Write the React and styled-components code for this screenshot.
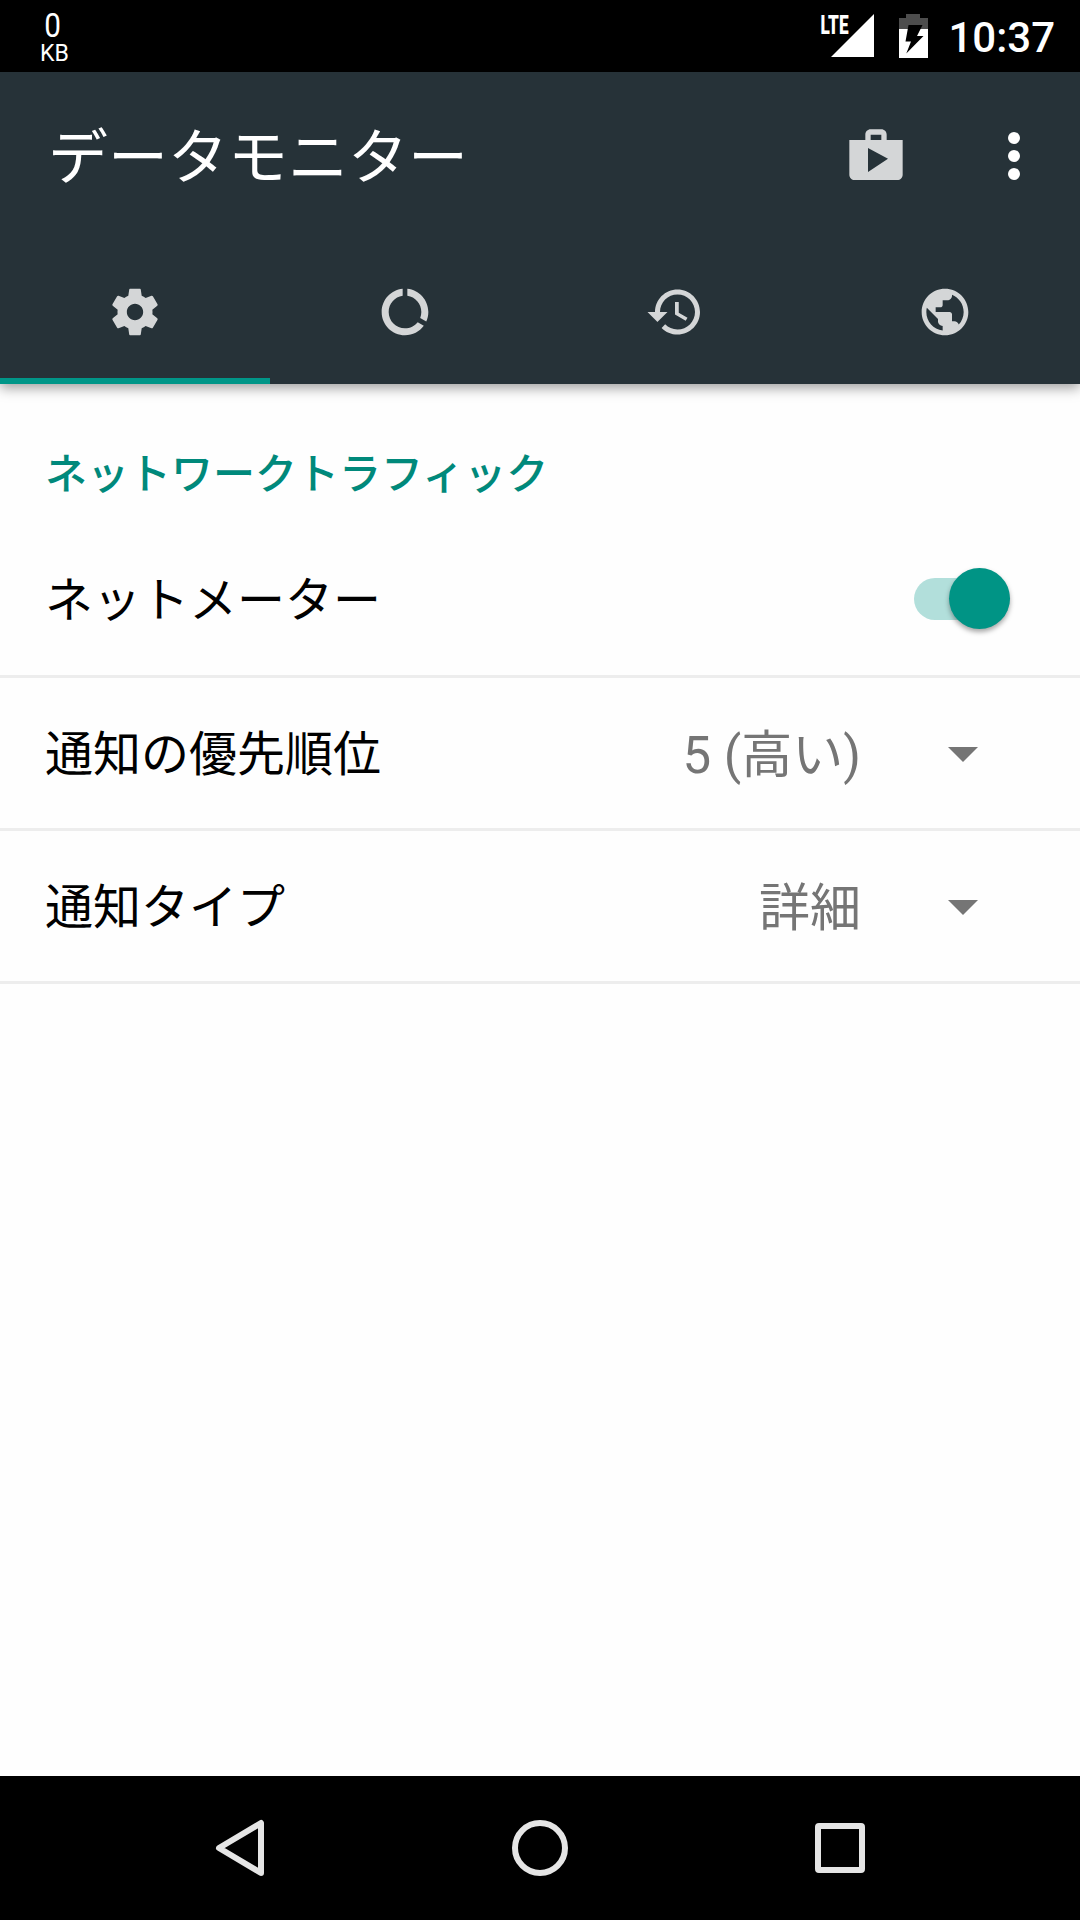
import React from "react";
import styled, { createGlobalStyle } from "styled-components";

export default function App() {
  return (
    <Screen>
      <GlobalStyle />
      <StatusBar>
        <Traffic>
          <TrafficValue>0</TrafficValue>
          <TrafficUnit>KB</TrafficUnit>
        </Traffic>
        <StatusIcons>
          <SignalIcon />
          <BatteryIcon />
          <Clock>10:37</Clock>
        </StatusIcons>
      </StatusBar>
      <Header>
        <Toolbar>
          <Title>データモニター</Title>
          <Actions>
            <Icon $size={64} viewBox="0 0 24 24">
              <path d={icons.shop} />
            </Icon>
            <OverflowIcon viewBox="0 0 12 48">
              <circle cx="6" cy="6" r="6" />
              <circle cx="6" cy="24" r="6" />
              <circle cx="6" cy="42" r="6" />
            </OverflowIcon>
          </Actions>
        </Toolbar>
        <Tabs>
          {tabs.map((tab, index) => {
            return (
              <Tab key={tab.icon} $active={index === 0}>
                <Icon $size={tab.size} viewBox="0 0 24 24">
                  <path d={icons[tab.icon]} />
                </Icon>
              </Tab>
            );
          })}
        </Tabs>
      </Header>
      <Content>
        <SectionTitle>ネットワークトラフィック</SectionTitle>
        <Row>
          <Label>ネットメーター</Label>
          <Switch>
            <Thumb />
          </Switch>
        </Row>
        {selects.map((item) => {
          return (
            <Row key={item.label}>
              <Label>{item.label}</Label>
              <Select>
                <Value>{item.value}</Value>
                <Arrow />
              </Select>
            </Row>
          );
        })}
      </Content>
      <NavBar>
        <NavIcon viewBox="0 0 60 60">
          <path d="M51 5v50L9 30z" />
        </NavIcon>
        <NavIcon viewBox="0 0 60 60">
          <circle cx="30" cy="30" r="25" />
        </NavIcon>
        <NavIcon viewBox="0 0 60 60">
          <rect x="8" y="8" width="44" height="44" rx="1" />
        </NavIcon>
      </NavBar>
    </Screen>
  );
}

function SignalIcon() {
  return (
    <svg width="56" height="64" viewBox="-2 -10 56 64" fill="#fff">
      <text
        x="0.500"
        y="19.500"
        fontSize="26"
        fontWeight="900"
        textLength="28"
        lengthAdjust="spacingAndGlyphs"
      >
        LTE
      </text>
      <path d="M54 0v43H11z" />
    </svg>
  );
}

function BatteryIcon() {
  return (
    <svg width="29" height="44" viewBox="0 0 29 44">
      <path fill="#4d4d4d" d="M7 0h14v4h8v11H0V4h7z" />
      <path fill="#fff" d="M0 15h29v29H0z" />
      <path fill="#000" d="M9.500 11h14L18 22h6.500L7.300 39.500 12 27.500H6.500z" />
    </svg>
  );
}

const GlobalStyle = createGlobalStyle`
  * {
    box-sizing: border-box;
  }

  body {
    margin: 0;
    font-family: Roboto, "Noto Sans CJK JP", sans-serif;
  }

  svg {
    display: block;
    flex: none;
  }
`;

const Screen = styled.div`
  display: flex;
  flex-direction: column;
  width: 1080px;
  height: 1920px;
  background: #fefefe;
  overflow: hidden;
`;

const StatusBar = styled.div`
  display: flex;
  justify-content: space-between;
  height: 72px;
  padding: 0 25px 0 40px;
  background: #000;
  color: #fff;
`;

const Traffic = styled.div`
  display: flex;
  flex-direction: column;
  padding-top: 10px;
`;

const TrafficValue = styled.span`
  padding-left: 3px;
  font-size: 33px;
  line-height: 31px;
  transform: scaleX(0.9);
`;

const TrafficUnit = styled.span`
  font-size: 24px;
  line-height: 24px;
  transform: scaleX(0.96);
  transform-origin: left;
`;

const StatusIcons = styled.div`
  display: flex;
  align-items: center;
  gap: 25px;
`;

const Clock = styled.span`
  margin-left: -5px;
  padding-top: 3px;
  font-size: 42px;
  font-weight: 500;
  line-height: 48px;
`;

const Header = styled.header`
  position: relative;
  height: 312px;
  background: #263238;
  box-shadow: 0 4px 12px rgba(0, 0, 0, 0.38);
`;

const Toolbar = styled.div`
  display: flex;
  align-items: center;
  justify-content: space-between;
  height: 168px;
  padding: 0 60px 0 48px;
`;

const Title = styled.h1`
  margin: 0;
  padding-top: 6px;
  color: #fff;
  font-size: 60px;
  font-weight: 400;
  line-height: 72px;
`;

const Actions = styled.div`
  display: flex;
  align-items: center;
  gap: 100px;
`;

const Icon = styled.svg`
  width: ${(props) => props.$size}px;
  height: ${(props) => props.$size}px;
  fill: #d4d6d7;
`;

const OverflowIcon = styled.svg`
  width: 12px;
  height: 48px;
  fill: #fff;
`;

const Tabs = styled.nav`
  display: grid;
  grid-template-columns: repeat(4, 1fr);
  height: 144px;
`;

const Tab = styled.div`
  display: flex;
  align-items: center;
  justify-content: center;
  box-shadow: ${(props) => (props.$active ? "inset 0 -6px #009688" : "none")};
`;

const Content = styled.main`
  flex: 1;
  padding-top: 61px;
`;

const SectionTitle = styled.h2`
  margin: 0;
  padding-left: 45px;
  color: #00897b;
  font-size: 42px;
  font-weight: 500;
  line-height: 60px;
`;

const Row = styled.div`
  display: flex;
  align-items: center;
  justify-content: space-between;
  height: 153px;
  padding: 0 70px 0 45px;
  border-bottom: 3px solid #ededed;

  ${SectionTitle} + & {
    height: 173px;
    padding-top: 17px;
  }
`;

const Label = styled.span`
  padding-top: 4px;
  color: #000;
  font-size: 48px;
  line-height: 60px;
`;

const Switch = styled.div`
  display: flex;
  align-items: center;
  width: 96px;
  height: 42px;
  padding-left: 35px;
  border-radius: 21px;
  background: #b2dfdb;
`;

const Thumb = styled.div`
  flex: none;
  width: 61px;
  height: 61px;
  border-radius: 50%;
  background: #009485;
  box-shadow: 0 3px 5px rgba(0, 0, 0, 0.35);
`;

const Select = styled.div`
  display: flex;
  align-items: center;
  gap: 87px;
  padding-right: 32px;
`;

const Value = styled.span`
  padding-top: 6px;
  color: #757575;
  font-size: 51px;
  line-height: 60px;
`;

const Arrow = styled.span`
  margin-top: 3px;
  border: 15px solid transparent;
  border-top-color: #757575;
  border-bottom: 0;
`;

const NavBar = styled.div`
  display: flex;
  align-items: center;
  justify-content: center;
  gap: 240px;
  height: 144px;
  background: #000;
`;

const NavIcon = styled.svg`
  width: 60px;
  height: 60px;
  fill: none;
  stroke: #e5e5e5;
  stroke-width: 6;
  stroke-linejoin: round;
`;

const selects = [
  { label: "通知の優先順位", value: "5 (高い)" },
  { label: "通知タイプ", value: "詳細" },
];

const tabs = [
  { icon: "settings", size: 56 },
  { icon: "usage", size: 56 },
  { icon: "history", size: 60 },
  { icon: "globe", size: 56 },
];

const icons = {
  shop: "M16 6V4c0-1.11-.89-2-2-2h-4c-1.11 0-2 .89-2 2v2H2v13c0 1.11.89 2 2 2h16c1.11 0 2-.89 2-2V6h-6zm-6-2h4v2h-4V4zM9 18V9l7.500 4L9 18z",
  settings:
    "M19.43 12.98c.04-.32.07-.64.07-.98s-.03-.66-.07-.98l2.110-1.650c.19-.15.24-.42.12-.64l-2-3.460c-.12-.22-.39-.3-.61-.22l-2.490 1c-.52-.4-1.080-.73-1.690-.98l-.38-2.650C14.460 2.180 14.250 2 14 2h-4c-.25 0-.46.18-.49.42l-.38 2.650c-.61.25-1.170.59-1.690.98l-2.490-1c-.23-.09-.49 0-.61.22l-2 3.460c-.13.22-.07.49.12.64l2.110 1.650c-.04.32-.07.65-.07.98s.03.66.07.98l-2.110 1.650c-.19.15-.24.42-.12.64l2 3.460c.12.22.39.3.61.22l2.490-1c.52.4 1.080.73 1.690.98l.38 2.650c.03.24.24.42.49.42h4c.25 0 .46-.18.49-.42l.38-2.650c.61-.25 1.170-.59 1.690-.98l2.490 1c.23.09.49 0 .61-.22l2-3.460c.12-.22.07-.49-.12-.64l-2.110-1.650zM12 15.500c-1.930 0-3.500-1.570-3.500-3.500s1.570-3.500 3.500-3.500 3.500 1.570 3.500 3.500-1.570 3.500-3.500 3.500z",
  usage:
    "M13 2.050v3.030c3.390.49 6 3.390 6 6.920 0 .9-.18 1.750-.48 2.540l2.600 1.530c.56-1.240.88-2.620.88-4.070 0-5.180-3.950-9.450-9-9.950zM12 19c-3.870 0-7-3.130-7-7 0-3.530 2.610-6.430 6-6.920V2.050c-5.060.5-9 4.760-9 9.950 0 5.520 4.470 10 9.990 10 3.310 0 6.240-1.610 8.060-4.090l-2.600-1.530C16.170 17.980 14.210 19 12 19z",
  history:
    "M13 3c-4.970 0-9 4.030-9 9H1l3.890 3.890.07.14L9 12H6c0-3.870 3.130-7 7-7s7 3.130 7 7-3.130 7-7 7c-1.930 0-3.680-.79-4.940-2.060l-1.420 1.420C8.270 19.990 10.510 21 13 21c4.970 0 9-4.030 9-9s-4.030-9-9-9zm-1 5v5l4.280 2.540.72-1.210-3.500-2.080V8H12z",
  globe:
    "M12 2C6.480 2 2 6.480 2 12s4.480 10 10 10 10-4.480 10-10S17.520 2 12 2zm-1 17.930c-3.950-.49-7-3.850-7-7.930 0-.62.08-1.210.21-1.790L9 15v1c0 1.100.9 2 2 2v1.930zm6.900-2.540c-.26-.81-1-1.390-1.900-1.390h-1v-3c0-.55-.45-1-1-1H8v-2h2c.55 0 1-.45 1-1V7h2c1.100 0 2-.9 2-2v-.41c2.930 1.190 5 4.060 5 7.410 0 2.080-.8 3.970-2.100 5.390z",
};
